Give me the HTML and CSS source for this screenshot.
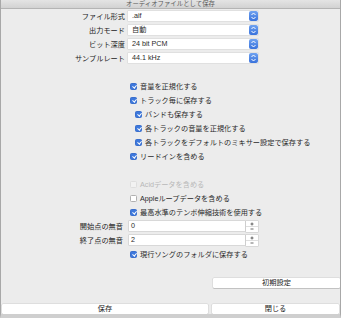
FILE: index.html
```html
<!DOCTYPE html>
<html lang="ja">
<head>
<meta charset="utf-8">
<link rel="stylesheet" href="styles.css">
</head>
<body>
<div class="window">
  <div class="titlebar">オーディオファイルとして保存</div>
  <div class="form">
    <div class="row"><span class="label">ファイル形式</span><div class="popup"><span class="val">.aif</span><span class="arrows"><svg viewBox="0 0 9 10" width="9" height="10"><path d="M2.5 4 L4.5 2 L6.5 4 M2.5 6 L4.5 8 L6.5 6" fill="none" stroke="#fff" stroke-width="1"/></svg></span></div></div>
    <div class="row"><span class="label">出力モード</span><div class="popup"><span class="val">自動</span><span class="arrows"><svg viewBox="0 0 9 10" width="9" height="10"><path d="M2.5 4 L4.5 2 L6.5 4 M2.5 6 L4.5 8 L6.5 6" fill="none" stroke="#fff" stroke-width="1"/></svg></span></div></div>
    <div class="row"><span class="label">ビット深度</span><div class="popup"><span class="val">24 bit PCM</span><span class="arrows"><svg viewBox="0 0 9 10" width="9" height="10"><path d="M2.5 4 L4.5 2 L6.5 4 M2.5 6 L4.5 8 L6.5 6" fill="none" stroke="#fff" stroke-width="1"/></svg></span></div></div>
    <div class="row"><span class="label">サンプルレート</span><div class="popup"><span class="val">44.1 kHz</span><span class="arrows"><svg viewBox="0 0 9 10" width="9" height="10"><path d="M2.5 4 L4.5 2 L6.5 4 M2.5 6 L4.5 8 L6.5 6" fill="none" stroke="#fff" stroke-width="1"/></svg></span></div></div>
    <div class="row"></div>
    <div class="row check"><span class="box on"></span>音量を正規化する</div>
    <div class="row check"><span class="box on"></span>トラック毎に保存する</div>
    <div class="row check sub"><span class="box on"></span>バンドも保存する</div>
    <div class="row check sub"><span class="box on"></span>各トラックの音量を正規化する</div>
    <div class="row check sub"><span class="box on"></span>各トラックをデフォルトのミキサー設定で保存する</div>
    <div class="row check"><span class="box on"></span>リードインを含める</div>
    <div class="row"></div>
    <div class="row check disabled"><span class="box dis"></span>Acidデータを含める</div>
    <div class="row check"><span class="box"></span>Appleループデータを含める</div>
    <div class="row check"><span class="box on"></span>最高水準のテンポ伸縮技術を使用する</div>
    <div class="row"><span class="label lf">開始点の無音</span><div class="field"><span class="val">0</span></div><div class="stepper"><svg viewBox="0 0 12 11" width="12" height="11"><path d="M6 1.5 V4.5 M4.5 3 H7.5 M4.5 8 H7.5" stroke="#444" stroke-width="0.8" fill="none"/><path d="M0 5.5 H12" stroke="#c8c8c8" stroke-width="0.6"/></svg></div></div>
    <div class="row"><span class="label lf">終了点の無音</span><div class="field"><span class="val">2</span></div><div class="stepper"><svg viewBox="0 0 12 11" width="12" height="11"><path d="M6 1.5 V4.5 M4.5 3 H7.5 M4.5 8 H7.5" stroke="#444" stroke-width="0.8" fill="none"/><path d="M0 5.5 H12" stroke="#c8c8c8" stroke-width="0.6"/></svg></div></div>
    <div class="row check"><span class="box on"></span>現行ソングのフォルダに保存する</div>
  </div>
  <div class="reset-row"><button class="btn reset">初期設定</button></div>
  <div class="bottom-bar"><button class="btn save">保存</button><button class="btn close">閉じる</button></div>
</div>
</body>
</html>
```
FILE: styles.css
```css
html, body {
  margin: 0;
  padding: 0;
  background: #ececec;
}
.window {
  width: 341px;
  height: 318px;
  box-sizing: border-box;
  background: #ececec;
  border-left: 1px solid #a8a8a8;
  border-right: 1px solid #a8a8a8;
  border-bottom: 4px solid #cfcfcf;
  font-family: "Liberation Sans", "Noto Sans CJK JP", sans-serif;
  font-size: 7.2px;
  color: #2a2a2a;
  overflow: hidden;
}
.titlebar {
  height: 8px;
  border-bottom: 1px solid #b4b4b4;
  background: linear-gradient(#e4e4e4, #d2d2d2);
  text-align: center;
  font-size: 6.4px;
  line-height: 8px;
  color: #5a5a5a;
}
.form {
  display: flex;
  flex-direction: column;
}
.row {
  height: 14px;
  display: flex;
  align-items: center;
  white-space: nowrap;
}
.label {
  width: 124px;
  text-align: right;
  margin-right: 3px;
  color: #222;
}
.label.lf {
  width: 122px;
  margin-right: 6px;
}
.popup {
  width: 130px;
  height: 10px;
  background: #fff;
  display: flex;
  align-items: center;
  justify-content: space-between;
  box-shadow: 0 0 0 0.5px #d4d4d4;
}
.val {
  padding-left: 4px;
  line-height: 10px;
}
.arrows {
  width: 9px;
  height: 10px;
  border-radius: 2px;
  background: linear-gradient(#6fa2f0, #3a73dc);
  display: flex;
}
.check {
  padding-left: 129px;
}
.check.sub {
  padding-left: 134px;
}
.box {
  width: 7px;
  height: 7px;
  box-sizing: border-box;
  border-radius: 1.5px;
  background: #fff;
  border: 0.6px solid #b0b0b0;
  margin-right: 3px;
  flex: none;
  position: relative;
}
.box.on {
  background: #3d78dc;
  border-color: #3a6fcc;
}
.box.on::after {
  content: "";
  position: absolute;
  left: 2px;
  top: 0.6px;
  width: 1.6px;
  height: 3.4px;
  border-right: 1px solid #fff;
  border-bottom: 1px solid #fff;
  transform: rotate(40deg);
}
.box.dis {
  background: #f2f2f2;
  border-color: #dedede;
}
.disabled {
  color: #b8b8b8;
}
.field {
  width: 116px;
  height: 10.5px;
  background: #fff;
  display: flex;
  align-items: center;
  box-shadow: 0 0 0 0.5px #c4c4c4;
}
.field .val {
  padding-left: 2px;
}
.stepper {
  width: 12px;
  height: 11px;
  margin-left: 1px;
  background: #fff;
  box-shadow: 0 0 0 0.5px #c4c4c4;
  display: flex;
}
.btn {
  font-family: inherit;
  font-size: 7.2px;
  color: #222;
  background: #fff;
  border: none;
  box-shadow: 0 0.5px 0.5px rgba(0,0,0,0.25), 0 0 0 0.5px #d0d0d0;
  height: 10px;
  padding: 0;
  line-height: 10px;
  border-radius: 1px;
}
.reset-row {
  display: flex;
  justify-content: flex-end;
  margin-top: 17px;
  padding-right: 0;
}
.reset {
  width: 127px;
}
.bottom-bar {
  display: flex;
  margin-top: 16px;
  padding-left: 1px;
  gap: 4px;
}
.save {
  width: 206px;
}
.close {
  width: 127px;
}
```
